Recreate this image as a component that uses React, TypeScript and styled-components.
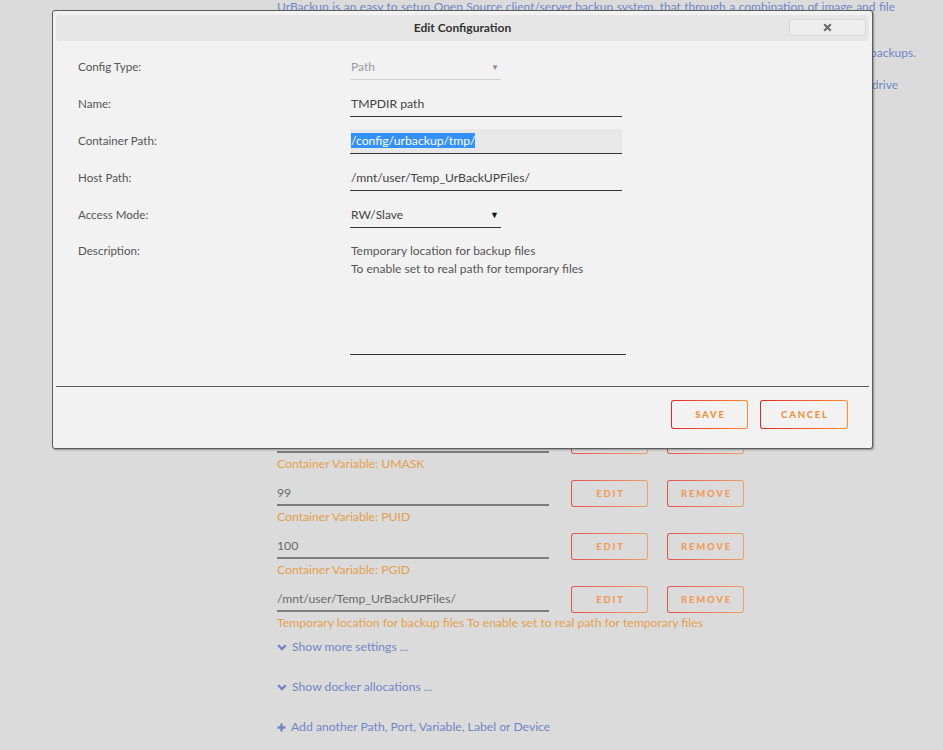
import React from 'react';
import styled, { createGlobalStyle } from 'styled-components';

const GlobalStyle = createGlobalStyle`
  html, body { margin: 0; padding: 0; }
  body {
    background: #dbdbdb;
    font-family: Lato, "Open Sans", sans-serif;
    overflow: hidden;
  }
  * { box-sizing: border-box; }
`;

const Page = styled.div`
  position: relative;
  width: 943px;
  height: 750px;
  overflow: hidden;
  padding-left: 277px;
`;

const Intro = styled.div`
  margin-top: -5px;
  width: 639px;
  color: #6e87c6;
  font-size: 12px;
  line-height: 23px;
`;

const IntroLine = styled.div<{ $align: 'justify' | 'right' | 'left'; $gap?: number; $pr?: number; $w?: number }>`
  text-align: ${(p) => p.$align};
  text-align-last: ${(p) => p.$align};
  margin-top: ${(p) => p.$gap ?? 0}px;
  padding-right: ${(p) => p.$pr ?? 0}px;
  width: ${(p) => (p.$w ? `${p.$w}px` : 'auto')};
  white-space: ${(p) => (p.$align === 'justify' ? 'normal' : 'nowrap')};
  overflow: hidden;
  height: 23px;
`;

const VarList = styled.div`
  margin-top: 13px;
  display: flex;
  flex-direction: column;
`;

const VarRow = styled.div`
  display: flex;
  align-items: flex-start;
`;

const VarField = styled.div`
  width: 272px;
`;

const VarValue = styled.div`
  height: 26px;
  border-bottom: 2px solid #7c7c7c;
  color: #6a6a6a;
  font-size: 12.2px;
  display: flex;
  align-items: center;
  padding-top: 1px;
`;

const VarHelp = styled.div`
  height: 27px;
  color: #e3a04c;
  font-size: 12.2px;
  line-height: 19px;
  padding-top: 1px;
  white-space: nowrap;
`;

const PageButton = styled.div<{ $ml: number }>`
  margin-left: ${(p) => p.$ml}px;
  width: 77px;
  height: 27px;
  border: 1px solid transparent;
  border-radius: 3px;
  background: linear-gradient(#dbdbdb, #dbdbdb) padding-box,
    linear-gradient(90deg, #de5454, #f0a060) border-box;
  color: #f09c5c;
  font-size: 9.5px;
  font-weight: 900;
  letter-spacing: 1.8px;
  display: flex;
  align-items: center;
  justify-content: center;
  padding-left: 2px;
`;

const Links = styled.div`
  display: flex;
  flex-direction: column;
  gap: 26px;
  padding-top: 1px;
`;

const LinkRow = styled.div`
  display: flex;
  align-items: center;
  gap: 5px;
  color: #6e87c6;
  font-size: 12.2px;
  line-height: 14px;
  height: 14px;
`;

const Dialog = styled.div`
  position: absolute;
  left: 52px;
  top: 10px;
  width: 821px;
  height: 439px;
  background: #f2f2f2;
  border: 1px solid #5c5c5c;
  border-radius: 3px;
  box-shadow: 1px 1px 2px rgba(0, 0, 0, 0.35);
  padding: 4px 3px 0;
  display: flex;
  flex-direction: column;
`;

const TitleBar = styled.div`
  height: 26px;
  background: #e6e6e6;
  border-radius: 3px;
  display: grid;
  grid-template-columns: 1fr auto 1fr;
  align-items: center;
  padding-bottom: 1px;
`;

const Title = styled.div`
  grid-column: 2;
  font-weight: 700;
  font-size: 12px;
  color: #333;
`;

const CloseButton = styled.div`
  grid-column: 3;
  justify-self: end;
  margin-right: 3px;
  width: 77px;
  height: 17px;
  background: #eeeeee;
  border: 1px solid #d6d6d6;
  border-radius: 3px;
  display: flex;
  align-items: center;
  justify-content: center;
`;

const Form = styled.div`
  display: grid;
  grid-template-columns: 272px 1fr;
  row-gap: 12px;
  padding: 14px 0 0 22px;
`;

const Label = styled.div<{ $top?: boolean }>`
  font-size: 11.6px;
  color: #555;
  height: ${(p) => (p.$top ? 'auto' : '25px')};
  display: flex;
  align-items: ${(p) => (p.$top ? 'flex-start' : 'center')};
  padding-bottom: ${(p) => (p.$top ? 0 : 1)}px;
  padding-top: ${(p) => (p.$top ? 2 : 0)}px;
  line-height: 18px;
`;

const SelectBox = styled.div<{ $disabled?: boolean }>`
  width: 151px;
  height: 25px;
  border-bottom: 1px solid ${(p) => (p.$disabled ? '#cfcfcf' : '#333')};
  color: ${(p) => (p.$disabled ? '#9a9a9a' : '#444')};
  font-size: 12px;
  display: flex;
  align-items: center;
  justify-content: space-between;
  padding: 0 2px 1px 1px;
`;

const Caret = styled.span<{ $disabled?: boolean }>`
  font-size: ${(p) => (p.$disabled ? 8 : 9)}px;
  color: ${(p) => (p.$disabled ? '#888' : '#111')};
`;

const TextBox = styled.div<{ $focused?: boolean }>`
  width: 272px;
  height: 25px;
  border-bottom: 1px solid #333;
  background: ${(p) => (p.$focused ? '#e8e8e8' : 'transparent')};
  color: #444;
  font-size: 12.2px;
  display: flex;
  align-items: center;
  padding: 0 0 1px 1px;
`;

const Selected = styled.span`
  background: #3390ff;
  color: #fff;
  line-height: 15px;
`;

const TextArea = styled.div`
  width: 276px;
  height: 115px;
  border-bottom: 1px solid #333;
  color: #555;
  font-size: 12px;
  line-height: 18px;
  padding: 2px 0 0 1px;
`;

const Separator = styled.div`
  margin-top: 31px;
  height: 1px;
  background: #5a5a5a;
`;

const Footer = styled.div`
  display: flex;
  justify-content: flex-end;
  gap: 12px;
  padding: 13px 21px 0 0;
`;

const DialogButton = styled.div<{ $w: number }>`
  width: ${(p) => p.$w}px;
  height: 29px;
  border: 1px solid transparent;
  border-radius: 3px;
  background: linear-gradient(#f2f2f2, #f2f2f2) padding-box,
    linear-gradient(90deg, #e22828, #ff8c2f) border-box;
  display: flex;
  align-items: center;
  justify-content: center;
  padding-left: 2px;
  color: #f2913d;
  font-size: 9.5px;
  font-weight: 900;
  letter-spacing: 1.8px;
`;

const hiddenRows = [
  { v: '55414', h: 'Container Port: 55414' },
  { v: '55415', h: 'Container Port: 55415' },
  { v: '35623', h: 'Container Port: 35623' },
  { v: '35623', h: 'Container Port: 35623 (UDP)' },
  { v: '/mnt/user/appdata/urbackup', h: 'Container Path: /config' },
  { v: '/mnt/user/backups/', h: 'Container Path: /backups' },
  { v: '000', h: 'Container Variable: UMASK' },
];

const visibleRows = [
  { v: '99', h: 'Container Variable: PUID' },
  { v: '100', h: 'Container Variable: PGID' },
  {
    v: '/mnt/user/Temp_UrBackUPFiles/',
    h: 'Temporary location for backup files To enable set to real path for temporary files',
  },
];

const rows = [...hiddenRows, ...visibleRows];

const Chevron = () => (
  <svg width="10" height="7" viewBox="0 0 10 7">
    <polyline points="1.2,1.2 5,5 8.8,1.2" fill="none" stroke="#6e87c6" strokeWidth="2.4" />
  </svg>
);

const Plus = () => (
  <svg width="9" height="9" viewBox="0 0 9 9">
    <path d="M4.5 0.5 V8.5 M0.5 4.5 H8.5" stroke="#6e87c6" strokeWidth="2.4" />
  </svg>
);

const CloseIcon = () => (
  <svg width="9" height="9" viewBox="0 0 9 9">
    <path d="M1.2 1.2 L7.8 7.8 M7.8 1.2 L1.2 7.8" stroke="#6b6b6b" strokeWidth="2.2" />
  </svg>
);

export default function App() {
  return (
    <>
      <GlobalStyle />
      <Page>
        <Intro>
          <IntroLine $align="justify" $w={618}>
            UrBackup is an easy to setup Open Source client/server backup system, that through a combination of image and file
          </IntroLine>
          <IntroLine $align="left">
            backups accomplishes both data safety and a fast restoration time.
          </IntroLine>
          <IntroLine $align="right">
            UrBackup also continuously watches folders you want backed up, in order to quickly find differences to previous backups.
          </IntroLine>
          <IntroLine $align="right" $gap={9} $pr={18}>
            Your files can be restored through the web interface, via the client or the Windows Explorer while the backups of drive
          </IntroLine>
        </Intro>
        <VarList>
          {rows.map((r) => (
            <VarRow key={r.h}>
              <VarField>
                <VarValue>{r.v}</VarValue>
                <VarHelp>{r.h}</VarHelp>
              </VarField>
              <PageButton $ml={22}>EDIT</PageButton>
              <PageButton $ml={19}>REMOVE</PageButton>
            </VarRow>
          ))}
        </VarList>
        <Links>
          <LinkRow>
            <Chevron />
            Show more settings ...
          </LinkRow>
          <LinkRow>
            <Chevron />
            Show docker allocations ...
          </LinkRow>
          <LinkRow>
            <Plus />
            Add another Path, Port, Variable, Label or Device
          </LinkRow>
        </Links>

        <Dialog>
          <TitleBar>
            <Title>Edit Configuration</Title>
            <CloseButton>
              <CloseIcon />
            </CloseButton>
          </TitleBar>
          <Form>
            <Label>Config Type:</Label>
            <SelectBox $disabled>
              <span>Path</span>
              <Caret $disabled>▼</Caret>
            </SelectBox>
            <Label>Name:</Label>
            <TextBox>TMPDIR path</TextBox>
            <Label>Container Path:</Label>
            <TextBox $focused>
              <Selected>/config/urbackup/tmp/</Selected>
            </TextBox>
            <Label>Host Path:</Label>
            <TextBox>/mnt/user/Temp_UrBackUPFiles/</TextBox>
            <Label>Access Mode:</Label>
            <SelectBox>
              <span>RW/Slave</span>
              <Caret>▼</Caret>
            </SelectBox>
            <Label $top>Description:</Label>
            <TextArea>
              Temporary location for backup files
              <br />
              To enable set to real path for temporary files
            </TextArea>
          </Form>
          <Separator />
          <Footer>
            <DialogButton $w={77}>SAVE</DialogButton>
            <DialogButton $w={88}>CANCEL</DialogButton>
          </Footer>
        </Dialog>
      </Page>
    </>
  );
}
